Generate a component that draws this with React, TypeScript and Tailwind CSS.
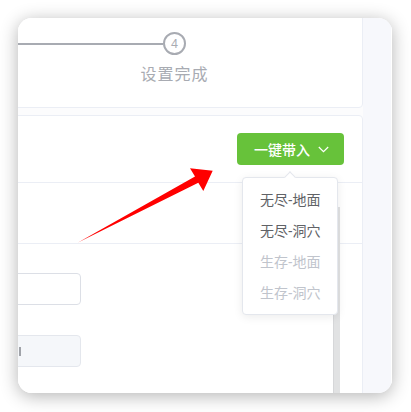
const font = { fontFamily: '"Noto Sans", "Noto Sans CJK SC", sans-serif' };

// dropdown options of the quick-fill button
const options = [
  { label: "无尽-地面", disabled: false },
  { label: "无尽-洞穴", disabled: false },
  { label: "生存-地面", disabled: true },
  { label: "生存-洞穴", disabled: true },
];

function StepHead() {
  return (
    <div className="flex pt-[23px]">
      <div className="w-[154px] h-[2px] bg-[#a8abb2] mt-[10.5px]" />
      <div className="flex flex-col items-center w-[23px]">
        <div className="w-[23px] h-[23px] rounded-full border-2 border-[#a8abb2] flex items-center justify-center text-[12px] leading-none text-[#a8abb2]">
          4
        </div>
        <div className="mt-[7px] whitespace-nowrap text-[16px] leading-[24px] text-[#a8abb2] tracking-[1px]">
          设置完成
        </div>
      </div>
    </div>
  );
}

function QuickFill() {
  return (
    <div className="relative">
      <button className="h-[32px] w-[107px] rounded-[4px] bg-[#67c23a] text-white text-[14px] font-medium flex items-center pl-[17px] gap-[8px]">
        <span>一键带入</span>
        <svg width="11" height="7" viewBox="0 0 11 7" className="mt-[1px]">
          <polyline points="0.8,1 5.5,5.6 10.2,1" fill="none" stroke="white" strokeWidth="1.2" />
        </svg>
      </button>
      <div className="absolute z-10 top-[44px] left-[5px] w-[96px] rounded-[4px] border border-[#e4e7ed] bg-white shadow-[0_2px_10px_rgba(0,0,0,0.08)] py-[6px]">
        <div className="absolute -top-[5px] left-1/2 -ml-[4px] w-[8px] h-[8px] rotate-45 bg-white border-l border-t border-[#e4e7ed]" />
        {options.map((o) => (
          <div
            key={o.label}
            className={
              "h-[31px] px-[17px] flex items-center text-[14px] whitespace-nowrap " +
              (o.disabled ? "text-[#c0c4cc]" : "text-[#606266]")
            }
          >
            {o.label}
          </div>
        ))}
      </div>
    </div>
  );
}

export default function App() {
  return (
    <div className="w-[411px] h-[412px] bg-white pt-[18px] pl-[18px]" style={font}>
      <div className="relative w-[374px] h-[375px] rounded-[14px] overflow-hidden bg-white flex shadow-[0_3px_18px_rgba(0,0,0,0.3)]">
        <div className="flex-1 flex flex-col gap-[7px] bg-[#fcfcfd]">
          {/* steps panel */}
          <div className="-mt-[10px] -ml-[10px] h-[100px] border border-[#ebeef5] rounded-[4px] bg-white">
            <StepHead />
          </div>

          {/* form panel */}
          <div className="relative flex-1 -ml-[10px] -mb-[10px] border border-[#ebeef5] rounded-[4px] bg-white flex flex-col">
            <div className="flex justify-end pt-[17px] pb-[17px] pr-[18px] border-b border-[#ebeef5]">
              <QuickFill />
            </div>
            <div className="h-[61px] border-b border-[#ebeef5]" />
            <div className="flex flex-col gap-[30px] pt-[29px]">
              <div className="w-[72px] h-[32px] rounded-[4px] border border-[#dcdfe6] bg-white" />
              <div className="w-[72px] h-[32px] rounded-[4px] border border-[#e4e7ed] bg-[#f5f7fa] flex items-center">
                <span className="ml-[9px] w-[2px] h-[9px] bg-[#a0a3a9]" />
              </div>
            </div>
            {/* scrollbar thumb */}
            <div className="absolute top-[91px] bottom-0 right-[22px] w-[7px] bg-[#e1e2e3] border-l border-[#d6d7d9]" />
          </div>
        </div>

        <div className="w-[29px] bg-[#f7f8fc] border-r border-white" />

        {/* red annotation arrow */}
        <svg className="absolute inset-0 pointer-events-none z-20" width="374" height="375" viewBox="0 0 374 375">
          <polygon
            points="60,224.5 177,158.6 172,150.3 194.7,152.7 185.3,173 180.3,164.8"
            fill="#ff0000"
          />
        </svg>
      </div>
    </div>
  );
}
